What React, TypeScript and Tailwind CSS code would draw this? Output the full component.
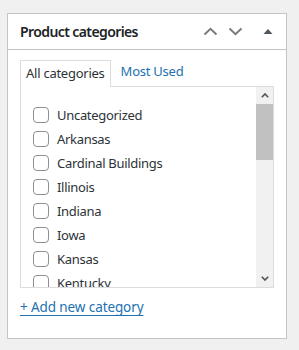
import React from "react";

const items = [
  "Uncategorized",
  "Arkansas",
  "Cardinal Buildings",
  "Illinois",
  "Indiana",
  "Iowa",
  "Kansas",
  "Kentucky",
];

export default function App() {
  return (
    <div
      className="bg-[#f0f0f1] w-[299px] h-[350px] pl-[7px] pt-[13px]"
      style={{ fontFamily: '"Noto Sans", "Open Sans", sans-serif' }}
    >
      <div className="w-[280px] h-[326px] bg-white border border-[#c3c4c7] flex flex-col">
        {/* header */}
        <div className="h-[36px] border-b border-[#c3c4c7] flex items-center pl-[12px] shrink-0">
          <div className="text-[14px] font-semibold text-[#1d2327] flex-1 leading-none tracking-[-0.6px]">
            Product categories
          </div>
          <div className="flex items-center">
            <svg width="15" height="9" viewBox="0 0 15 9">
              <polyline points="1.5,7.5 7.5,1.8 13.5,7.5" fill="none" stroke="#787c82" strokeWidth="2" />
            </svg>
            <svg width="15" height="9" viewBox="0 0 15 9" className="ml-[10px]">
              <polyline points="1.5,1.5 7.5,7.2 13.5,1.5" fill="none" stroke="#787c82" strokeWidth="2" />
            </svg>
            <svg width="10" height="7" viewBox="0 0 10 7" className="ml-[20px] mr-[13px]">
              <polygon points="0.5,6 5,1 9.5,6" fill="#50575e" />
            </svg>
          </div>
        </div>
        {/* body */}
        <div className="px-[12px] pt-[9px]">
          <div className="flex items-end text-[13px] leading-none tracking-[-0.25px]">
            <div className="h-[27px] px-[5px] flex items-center border border-b-0 border-[#dcdcde] bg-white text-[#2c3338] relative z-10 -mb-px pb-[2px]">
              All categories
            </div>
            <div className="h-[27px] pl-[10px] flex items-center text-[#2271b1] pb-[2px]">
              Most Used
            </div>
          </div>
          <div className="h-[202px] border border-[#dcdcde] flex overflow-hidden">
            <div className="flex-1 overflow-hidden pl-[12px] pt-[16px]">
              {items.map((t) => (
                <div key={t} className="h-[24px] flex items-center">
                  <div className="w-[16px] h-[16px] rounded-[4px] border border-[#8c8f94] bg-white shrink-0" />
                  <span className="ml-[8px] text-[13px] text-[#2c3338] leading-none tracking-[-0.3px]">{t}</span>
                </div>
              ))}
            </div>
            <div className="w-[17px] h-full bg-[#f1f1f1] flex flex-col">
              <div className="h-[17px] flex items-center justify-center">
                <svg width="8" height="5" viewBox="0 0 8 5">
                  <polyline points="0.8,4.2 4,1 7.2,4.2" fill="none" stroke="#505050" strokeWidth="1.6" />
                </svg>
              </div>
              <div className="h-[56px] bg-[#c1c1c1]" />
              <div className="flex-1" />
              <div className="h-[17px] flex items-center justify-center">
                <svg width="8" height="5" viewBox="0 0 8 5">
                  <polyline points="0.8,0.8 4,4 7.2,0.8" fill="none" stroke="#505050" strokeWidth="1.6" />
                </svg>
              </div>
            </div>
          </div>
          <div className="mt-[13px] text-[13.5px] leading-none tracking-[-0.1px]">
            <span className="text-[#2271b1] underline underline-offset-[3px]">+ Add new category</span>
          </div>
        </div>
      </div>
    </div>
  );
}
